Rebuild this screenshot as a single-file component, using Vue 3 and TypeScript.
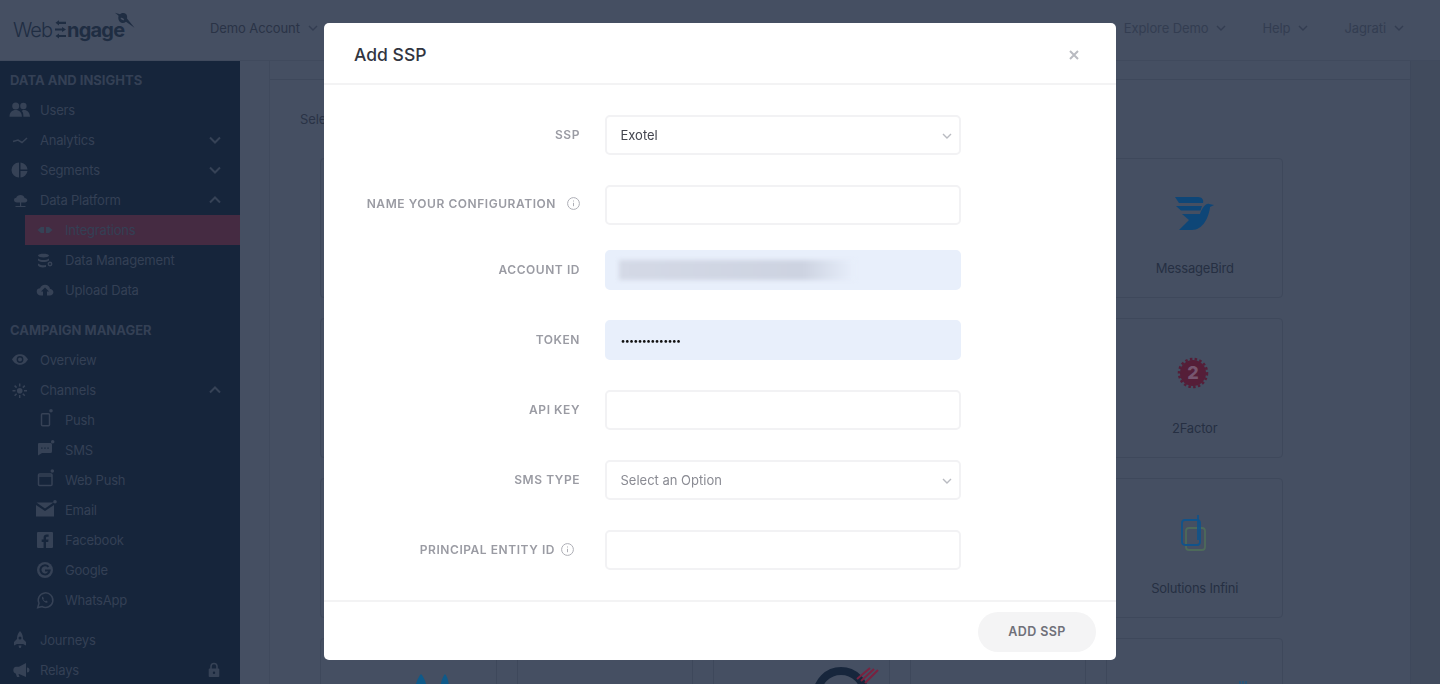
<script setup lang="ts">
interface Glyph {
  fill?: string;
  stroke?: string;
  knock?: string;
}

interface NavRow {
  label: string;
  kind: "section" | "item" | "sub";
  icon?: string;
  chevron?: "up" | "down";
  active?: boolean;
  locked?: boolean;
  spaced?: boolean;
}

interface Card {
  name?: string;
  logo?: string;
}

interface Field {
  label: string;
  kind: "input" | "select" | "filled" | "secret";
  value?: string;
  placeholder?: boolean;
  info?: "wide" | "tight";
  tight?: boolean;
}

const circle = (cx: number, cy: number, r: number) =>
  `M${cx - r} ${cy}a${r} ${r} 0 1 0 ${r * 2} 0a${r} ${r} 0 1 0 ${-r * 2} 0z`;

const glyphs: Record<string, Glyph> = {
  users: {
    fill:
      circle(7.7, 8, 3.5) +
      circle(15.4, 8, 3.2) +
      "M1.5 18.7c0-4.4 2.6-6.7 6.2-6.7s6.2 2.3 6.2 6.7z" +
      "M15 12c3.600-.6 6.800 1.600 7 6.700h-6.600c0-2.600-.2-4.800-1.700-5.800z",
  },
  analytics: { stroke: "M5 13.500L10 12l4 2.500L19 10" },
  segments: {
    fill:
      "M11 4.500a7.500 7.500 0 0 0 0 15z" +
      "M12.500 4.500a7.500 7.500 0 0 1 7 7h-7z" +
      "M12.500 13h7a7.500 7.500 0 0 1-7 6.500z",
  },
  platform: {
    fill:
      "M9 14.500C7 14.500 6 13.300 6 12c0-1.400 1-2.300 2.200-2.300C8.800 8 10.500 7 12.500 7c2 0 3.700 1.200 4.100 3 1.600 0 2.700 1 2.700 2.300 0 1.300-1.100 2.200-2.300 2.200z" +
      "M12 14.500h1.200V18H12z" +
      "M7.500 18h10v1h-10z",
  },
  integrations: { fill: "M4.500 12L8 9h3v6H8zM13 9h3l3.500 3L16 15h-3z" },
  data: {
    fill:
      "M5 7.500C5 5 16 5 16 7.500S5 10 5 7.500z" +
      "M5 10.500c3 2 8 2 11 0v2c-3 2-8 2-11 0z" +
      "M5 15.500c3 2 6 2 8 1.500v2c-3 1-7 .5-8-1.500z",
    stroke: "M15.300 16a1.700 1.700 0 1 0 3.400 0a1.700 1.700 0 1 0-3.400 0z",
  },
  upload: {
    fill:
      "M8 17.500c-3 0-4.300-2-4.300-4s1.500-3.200 3.300-3.200C7.700 8 9.700 6.700 12 6.700c2.800 0 4.700 2 5 4.100 2 .2 3.400 1.700 3.400 3.500 0 1.900-1.600 3.200-3.400 3.200h-3v-4h2l-4-4-4 4h2v4z",
  },
  overview: {
    fill:
      "M4 11.500C6.500 7.500 9 6.300 12 6.300s5.500 1.200 8 5.200c-2.500 4-5 5.200-8 5.200s-5.500-1.200-8-5.200z" +
      circle(12, 11.5, 3.4) +
      circle(12, 11.5, 2),
  },
  channels: {
    fill: circle(11.7, 12.700, 2.800),
    stroke:
      "M11.700 5.500v3M11.700 17v3M4.500 12.700h3M16 12.700h3M6.600 7.600l2 2M14.800 15.800l2 2M16.800 7.600l-2 2M8.600 15.800l-2 2",
  },
  push: {
    fill: circle(18, 2.700, 1.800),
    stroke: "M9.500 5.700h6a1 1 0 0 1 1 1v10a1 1 0 0 1-1 1h-6a1 1 0 0 1-1-1v-10a1 1 0 0 1 1-1z",
  },
  sms: {
    fill:
      circle(19.700, 3.700, 1.800) +
      "M6 5h11.500a1.500 1.500 0 0 1 1.500 1.500v7a1.500 1.500 0 0 1-1.500 1.500H9l-4 2.500V6a1 1 0 0 1 1-1z" +
      "M8.200 9.400h1.300v1.300H8.200zM11.300 9.400h1.300v1.300h-1.300zM14.400 9.400h1.300v1.300h-1.300z",
  },
  webpush: {
    fill: circle(19.300, 3, 1.800),
    stroke: "M6.500 6h11.500a1 1 0 0 1 1 1v9.500a1 1 0 0 1-1 1H6.500a1 1 0 0 1-1-1V7a1 1 0 0 1 1-1zM5.500 8h13.500",
  },
  email: {
    fill: circle(22, 3.700, 1.800) + "M3.500 4.500h17L12 10.500zM3 7l9 6 9-6v11.500H3z",
  },
  facebook: {
    fill:
      "M5 4h14a1 1 0 0 1 1 1v14a1 1 0 0 1-1 1H5a1 1 0 0 1-1-1V5a1 1 0 0 1 1-1z" +
      "M13 20v-6h2.200l.3-2.500H13V10c0-.8.3-1.200 1.200-1.200h1.400V6.600h-1.800c-2 0-3.200 1.200-3.200 3.100v1.800H8.700V14h1.900v6z",
  },
  google: {
    fill: circle(12, 12, 8),
    knock: "M15.500 8.800A4.600 4.600 0 1 0 16.600 12.500H12",
  },
  whatsapp: {
    fill: "M9.500 8.500c-1 1-.7 2.600 1 4.400s3.400 2.300 4.400 1.200l-1.600-1.500-1 .6c-.8-.4-1.600-1.200-2-2l.6-1z",
    stroke: "M4.700 19.600l1.300-4.300A7.300 7.300 0 1 1 9 18.500z",
  },
  journeys: {
    fill:
      "M12 3c2.500 2.500 3 5.500 3 8l3 3v3.500L15 16H9l-3 1.500V14l3-3c0-2.500.5-5.500 3-8z" +
      circle(12, 10, 1.500) +
      "M10.500 17.500h3l-.5 2q-1 1-2 0z",
  },
  relays: {
    fill:
      "M18 5v14l-7-3h-.5l1 3H9l-1.300-3.400C6 15 5.300 13.800 5.300 12c0-2 1.200-3.300 2.700-3.300h3z" +
      "M19 9.500a2.500 2.500 0 0 1 0 5z",
  },
};

const navRows: NavRow[] = [
  { label: "Data and Insights", kind: "section" },
  { label: "Users", kind: "item", icon: "users" },
  { label: "Analytics", kind: "item", icon: "analytics", chevron: "down" },
  { label: "Segments", kind: "item", icon: "segments", chevron: "down" },
  { label: "Data Platform", kind: "item", icon: "platform", chevron: "up" },
  { label: "Integrations", kind: "sub", icon: "integrations", active: true },
  { label: "Data Management", kind: "sub", icon: "data" },
  { label: "Upload Data", kind: "sub", icon: "upload" },
  { label: "Campaign Manager", kind: "section", spaced: true },
  { label: "Overview", kind: "item", icon: "overview" },
  { label: "Channels", kind: "item", icon: "channels", chevron: "up" },
  { label: "Push", kind: "sub", icon: "push" },
  { label: "SMS", kind: "sub", icon: "sms" },
  { label: "Web Push", kind: "sub", icon: "webpush" },
  { label: "Email", kind: "sub", icon: "email" },
  { label: "Facebook", kind: "sub", icon: "facebook" },
  { label: "Google", kind: "sub", icon: "google" },
  { label: "WhatsApp", kind: "sub", icon: "whatsapp" },
  { label: "Journeys", kind: "item", icon: "journeys", spaced: true },
  { label: "Relays", kind: "item", icon: "relays", locked: true },
];

const cards: Card[] = [
  {}, {}, {}, {}, { name: "MessageBird", logo: "messagebird" },
  {}, {}, {}, {}, { name: "2Factor", logo: "twofactor" },
  {}, {}, {}, {}, { name: "Solutions Infini", logo: "infini" },
  { logo: "teal" }, {}, { logo: "ring" }, {}, { logo: "dots" },
];

const fields: Field[] = [
  { label: "SSP", kind: "select", value: "Exotel" },
  { label: "Name your configuration", kind: "input", info: "wide", tight: true },
  { label: "Account ID", kind: "filled" },
  { label: "Token", kind: "secret", value: "webengagedemo1" },
  { label: "API Key", kind: "input" },
  { label: "SMS Type", kind: "select", value: "Select an Option", placeholder: true },
  { label: "Principal Entity ID", kind: "input", info: "tight" },
];
</script>

<template>
  <div class="page">
    <header class="topbar">
      <svg class="logo" width="140" height="60" viewBox="0 0 140 60">
        <text x="13" y="37" class="logo-light">Web</text>
        <path d="M66 21.700h-7v-1.500L55.500 22.800l3.500 2.600v-1.500h7zM55 28.400h7v-1.500l4 2.600-4 2.600v-1.500h-7zM66 34.900h-7v-1.500l-3.500 2.600 3.500 2.600v-1.500h7z" fill="#1f2d42" />
        <text x="67" y="37" class="logo-bold">ngage</text>
        <path d="M115 12.800l5 1.400c1.500-1.500 4.500-1.800 6-.2 1.200 1.300 1.300 3 1 4.500l7.500 9.200-8.500-6c-2 1.600-4.500 1.600-6 .2-1.800-1.600-2-4.300-1.400-6.200z" fill="#1f2d42" />
        <path d="M120.500 18c1.500-.6 3 .2 3.800 2-1.500 .6-3.200-.2-3.800-2z" fill="#454f62" />
      </svg>
      <div class="top-item">
        <span>Demo Account</span>
        <svg class="top-chevron" width="10" height="6" viewBox="0 0 10 6"><path d="M1 1l4 4 4-4" /></svg>
      </div>
      <nav class="top-right">
        <div v-for="entry in ['Explore Demo', 'Help', 'Jagrati']" :key="entry" class="top-item light">
          <span>{{ entry }}</span>
          <svg class="top-chevron" width="10" height="6" viewBox="0 0 10 6"><path d="M1 1l4 4 4-4" /></svg>
        </div>
      </nav>
    </header>

    <div class="workspace">
      <aside class="sidebar">
        <template v-for="row in navRows" :key="row.label">
          <div v-if="row.kind === 'section'" class="nav-section" :class="{ spaced: row.spaced }">{{ row.label }}</div>
          <div v-else class="nav-row" :class="[row.kind, { active: row.active, spaced: row.spaced }]">
            <svg class="nav-icon" width="24" height="24" viewBox="0 0 24 24">
              <path v-if="glyphs[row.icon!].fill" :d="glyphs[row.icon!].fill" fill-rule="evenodd" class="icon-fill" />
              <path v-if="glyphs[row.icon!].stroke" :d="glyphs[row.icon!].stroke" class="icon-stroke" />
              <path v-if="glyphs[row.icon!].knock" :d="glyphs[row.icon!].knock" class="icon-knock" />
            </svg>
            <span>{{ row.label }}</span>
            <svg v-if="row.chevron" class="nav-chevron" :class="row.chevron" width="12" height="8" viewBox="0 0 12 8">
              <path d="M1 1.500l5 5 5-5" />
            </svg>
            <svg v-if="row.locked" class="nav-lock" width="12" height="16" viewBox="0 0 12 16">
              <path d="M3 7V4.500a3 3 0 0 1 6 0V7" class="lock-arc" />
              <path d="M1.500 6.500h9a.8.8 0 0 1 .8.8v7a.8.8 0 0 1-.8.8h-9a.8.8 0 0 1-.8-.8v-7a.8.8 0 0 1 .8-.8zM6 9.500a1.200 1.200 0 1 0 0 2.400a1.200 1.200 0 1 0 0-2.400z" fill-rule="evenodd" class="icon-fill" />
            </svg>
          </div>
        </template>
      </aside>

      <main class="content">
        <section class="panel">
          <div class="panel-tabs"></div>
          <p class="panel-intro">Select an SSP</p>
          <div class="card-grid">
            <div v-for="(card, index) in cards" :key="index" class="card">
              <div class="card-logo" :class="card.logo">
                <svg v-if="card.logo === 'messagebird'" width="39" height="33" viewBox="0 0 39 33" fill="#0e4677">
                  <path d="M0 0h23c4 0 6 3 5 6H4zM1 9h26l-1.500 4.500H6z" />
                  <path d="M7 17h18c2-6 6-11 9-10l5 1-4 2c-1 10-7 23-18 23H4l10-10z" />
                </svg>
                <svg v-else-if="card.logo === 'twofactor'" width="32" height="32" viewBox="0 0 32 32">
                  <circle cx="16" cy="16" r="13" fill="#551e38" />
                  <circle cx="16" cy="16" r="14" fill="none" stroke="#551e38" stroke-width="2.500" stroke-dasharray="2.500 2.300" />
                  <text x="16" y="22" text-anchor="middle" class="badge-digit">2</text>
                </svg>
                <svg v-else-if="card.logo === 'infini'" width="26" height="38" viewBox="0 0 26 38" fill="none" stroke-width="1.800">
                  <rect x="5" y="14" width="19" height="22" rx="3" stroke="#4d6a5a" />
                  <rect x="1" y="6" width="18" height="25" rx="3" stroke="#11538a" />
                  <path d="M17 1v25" stroke="#11538a" />
                </svg>
                <svg v-else-if="card.logo === 'teal'" width="36" height="40" viewBox="0 0 36 40" fill="#0f5a8a">
                  <path d="M1 16C2 8 5 3 7 1c2 2 5 7 6 15z" />
                  <path d="M26 16c1-8 3-13 5-15 2 2 4 7 4 15z" />
                </svg>
                <svg v-else-if="card.logo === 'ring'" width="66" height="50" viewBox="0 0 66 50" fill="none">
                  <circle cx="27" cy="29" r="24" stroke="#17263c" stroke-width="8" />
                  <path d="M43 13L56 2M47 15L60 3M51 17L64 4" stroke="#7a2240" stroke-width="2" />
                </svg>
                <svg v-else-if="card.logo === 'dots'" width="12" height="24" viewBox="0 0 12 24" stroke="#0f5a8a" stroke-width="1">
                  <path d="M3 0v3M6 0v3M9 0v3" />
                </svg>
              </div>
              <div v-if="card.name" class="card-name">{{ card.name }}</div>
            </div>
          </div>
        </section>
      </main>
      <div class="right-strip"></div>
    </div>

    <div class="backdrop">
      <div class="modal">
        <div class="modal-head">
          <h2>Add SSP</h2>
          <svg width="10" height="10" viewBox="0 0 10 10" class="modal-close"><path d="M1 1l8 8M9 1l-8 8" /></svg>
        </div>
        <form class="modal-body" @submit.prevent>
          <div v-for="field in fields" :key="field.label" class="form-row" :class="{ tight: field.tight }">
            <label class="form-label" :class="field.info">
              <span>{{ field.label }}</span>
              <svg v-if="field.info" class="info-icon" width="13" height="13" viewBox="0 0 13 13">
                <circle cx="6.500" cy="6.500" r="5.900" />
                <path d="M6.500 5.800v3.400M6.500 3.500v1" />
              </svg>
            </label>
            <div v-if="field.kind === 'select'" class="control select" :class="{ placeholder: field.placeholder }">
              <span>{{ field.value }}</span>
              <svg class="select-chevron" width="10" height="6" viewBox="0 0 10 6"><path d="M1 1l4 4 4-4" /></svg>
            </div>
            <div v-else-if="field.kind === 'filled'" class="control autofill">
              <div class="redacted"></div>
            </div>
            <input v-else-if="field.kind === 'secret'" class="control autofill secret" type="password" :value="field.value" readonly />
            <input v-else class="control" type="text" readonly />
          </div>
        </form>
        <div class="modal-foot">
          <button type="button" class="add-btn">ADD SSP</button>
        </div>
      </div>
    </div>
  </div>
</template>

<style scoped>
.page {
  height: 684px;
  overflow: hidden;
  display: flex;
  flex-direction: column;
  background: #454f62;
  font-family: Inter, "Liberation Sans", sans-serif;
  color: #262f42;
}

.topbar {
  flex: 0 0 60px;
  display: flex;
  align-items: center;
  background: #454f62;
  border-bottom: 1px solid #404a5d;
  box-sizing: border-box;
}

.logo {
  flex: none;
  margin-right: 70px;
}

.logo-light {
  font-size: 20px;
  font-weight: 300;
  letter-spacing: -1px;
  fill: #1f2d42;
}

.logo-bold {
  font-size: 20px;
  font-weight: 700;
  letter-spacing: -0.8px;
  fill: #1f2d42;
}

.top-item {
  display: flex;
  align-items: center;
  gap: 8px;
  font-size: 13px;
  letter-spacing: -0.1px;
  color: #2a3346;
  margin-top: -4px;
}

.top-item.light {
  color: #333d51;
}

.top-chevron {
  fill: none;
  stroke: #333d51;
  stroke-width: 1.4;
}

.top-right {
  margin-left: auto;
  margin-right: 36px;
  display: flex;
  gap: 36px;
}

.workspace {
  flex: 1;
  display: flex;
  min-height: 0;
}

.sidebar {
  flex: 0 0 240px;
  background: #16253b;
  padding-top: 4px;
  font-size: 13px;
  color: #344055;
  letter-spacing: -0.2px;
}

.nav-section {
  height: 30px;
  line-height: 30px;
  padding-left: 10px;
  font-size: 13px;
  font-weight: 700;
  letter-spacing: 0;
  text-transform: uppercase;
  color: #344055;
}

.spaced {
  margin-top: 10px;
}

.nav-row {
  height: 30px;
  display: flex;
  align-items: center;
  gap: 8px;
  padding-left: 8px;
  box-sizing: border-box;
}

.nav-row.sub {
  padding-left: 33px;
}

.nav-row.active {
  margin-left: 25px;
  padding-left: 8px;
  background: #452b42;
}

.nav-icon {
  flex: none;
}

.icon-fill {
  fill: #364256;
}

.icon-stroke {
  fill: none;
  stroke: #364256;
  stroke-width: 1.500;
}

.icon-knock {
  fill: none;
  stroke: #16253b;
  stroke-width: 2;
}

.nav-chevron {
  margin-left: auto;
  margin-right: 19px;
  fill: none;
  stroke: #364256;
  stroke-width: 2;
}

.nav-chevron.up {
  transform: rotate(180deg);
}

.nav-lock {
  margin-left: auto;
  margin-right: 20px;
}

.lock-arc {
  fill: none;
  stroke: #364256;
  stroke-width: 1.600;
}

.content {
  flex: 1;
  padding-left: 29px;
  min-width: 0;
}

.panel {
  height: 100%;
  border-left: 1px solid #404a5d;
  box-sizing: border-box;
}

.panel-tabs {
  height: 19px;
  border-bottom: 1px solid #3e485b;
  box-sizing: border-box;
}

.panel-intro {
  margin: 0;
  padding: 29px 0 0 30px;
  height: 20px;
  line-height: 20px;
  font-size: 13px;
  letter-spacing: -0.1px;
  color: #2a3346;
}

.card-grid {
  margin: 29px 0 0 50px;
  width: 963px;
  display: grid;
  grid-template-columns: repeat(5, minmax(0, 1fr));
  grid-auto-rows: 140px;
  gap: 20px;
}

.card {
  border: 1px solid #3e485b;
  border-radius: 4px;
  box-sizing: border-box;
  padding-top: 8px;
  text-align: center;
}

.card-logo {
  height: 92px;
  display: flex;
  align-items: center;
  justify-content: center;
}

.card-logo.twofactor {
  padding-right: 4px;
}

.card-logo.infini {
  padding-right: 1px;
}

.card-logo.teal {
  transform: translateX(24px);
}

.card-logo.ring {
  transform: translate(46px, -2px);
}

.card-logo.dots {
  transform: translateX(48px);
}

.card-name {
  font-size: 13px;
  line-height: 16px;
  margin-top: 1px;
  letter-spacing: -0.2px;
  color: #262f42;
}

.badge-digit {
  font-size: 18px;
  font-weight: 800;
  fill: #76566f;
}

.right-strip {
  flex: 0 0 30px;
  background: #414b5d;
  border-left: 1px solid #3e485b;
  box-sizing: border-box;
}

.backdrop {
  position: fixed;
  inset: 0;
  display: flex;
  align-items: flex-start;
  justify-content: center;
  padding-top: 23px;
}

.modal {
  width: 792px;
  height: 637px;
  display: flex;
  flex-direction: column;
  background: #fff;
  border-radius: 5px;
  box-sizing: border-box;
}

.modal-head {
  flex: 0 0 62px;
  display: flex;
  align-items: center;
  justify-content: space-between;
  padding: 3px 37px 0 30px;
  border-bottom: 2px solid #f3f3f4;
  box-sizing: border-box;
}

.modal-head h2 {
  margin: 0;
  font-size: 17.500px;
  font-weight: 500;
  color: #32353f;
}

.modal-close {
  fill: none;
  stroke: #b9bbc1;
  stroke-width: 2;
}

.modal-body {
  flex: 1;
  margin: 0;
  padding-top: 30px;
  box-sizing: border-box;
}

.form-row {
  display: flex;
  align-items: center;
  gap: 25px;
  margin-bottom: 30px;
}

.form-row.tight {
  margin-bottom: 25px;
}

.form-label {
  flex: 0 0 256px;
  box-sizing: border-box;
  display: flex;
  justify-content: flex-end;
  align-items: center;
  font-size: 12px;
  font-weight: 600;
  letter-spacing: 0.55px;
  text-transform: uppercase;
  color: #9a9ba3;
  margin-top: -1px;
}

.info-icon {
  fill: none;
  stroke: #adaeb5;
  stroke-width: 1;
  flex: none;
}

.form-label.wide {
  margin-top: -3px;
}

.form-label.wide .info-icon {
  margin-left: 11px;
}

.form-label.tight {
  padding-right: 6px;
}

.form-label.tight .info-icon {
  margin-left: 6px;
}

.control {
  flex: 0 0 356px;
  width: 356px;
  height: 40px;
  box-sizing: border-box;
  border: 2px solid #f2f2f4;
  border-radius: 5px;
  background: #fff;
  padding: 0 13.500px;
  font-family: inherit;
  font-size: 13px;
  color: #43454f;
  outline: none;
}

.select {
  display: flex;
  align-items: center;
  justify-content: space-between;
  padding: 0 7px 0 13.500px;
}

.select.placeholder {
  color: #8a8b93;
}

.select-chevron {
  fill: none;
  stroke: #b9bbc1;
  stroke-width: 1.400;
  margin-top: 2px;
}

.autofill {
  background: #e8effb;
  border-color: #e8effb;
}

.secret {
  color: #111;
  font-size: 9px;
  letter-spacing: -0.8px;
}

.redacted {
  width: 236px;
  height: 20px;
  margin: 8px 0 0 -2px;
  background: linear-gradient(90deg, #d4d9e6 0%, #cdd3e1 78%, #e8effb 100%);
  filter: blur(2px);
}

.modal-foot {
  flex: 0 0 61px;
  display: flex;
  align-items: center;
  justify-content: flex-end;
  padding-right: 20px;
  border-top: 2px solid #f3f3f4;
  box-sizing: border-box;
}

.add-btn {
  width: 118px;
  height: 40px;
  border: 0;
  border-radius: 20px;
  background: #f4f4f5;
  font-family: inherit;
  font-size: 12.500px;
  font-weight: 600;
  letter-spacing: 0.4px;
  color: #6f7079;
}
</style>

<style>
html,
body {
  margin: 0;
  overflow: hidden;
}
</style>
